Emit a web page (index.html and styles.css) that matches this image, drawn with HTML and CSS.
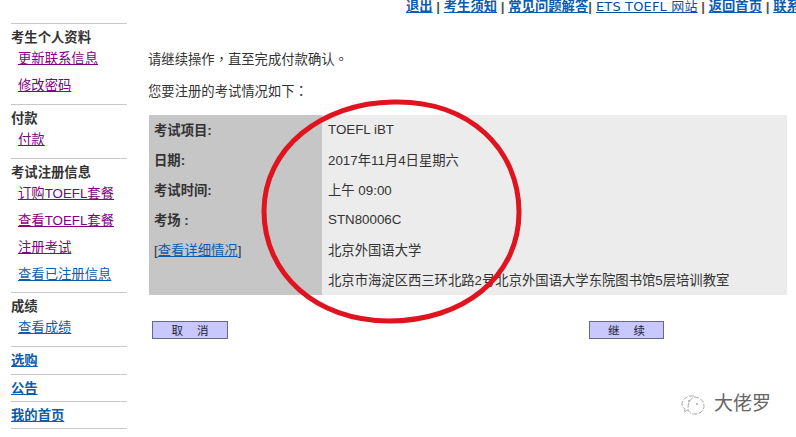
FILE: index.html
```html
<!DOCTYPE html>
<html>

<head>
    <meta charset="utf-8">
    <title>考试注册信息</title>
    <link rel="stylesheet" href="styles.css">
</head>

<body>
    <nav class="top_links">
        <a href="#">退出</a> | <a href="#">考生须知</a> | <a href="#">常见问题解答</a>|<a href="#" class="ets">ETS TOEFL 网站</a> | <a href="#">返回首页</a> | <a href="#">联系我们</a>
    </nav>

    <div class="page">
        <aside class="side">
            <div class="side_sec">
                <h4>考生个人资料</h4>
                <a href="#" class="visited">更新联系信息</a>
                <a href="#" class="visited">修改密码</a>
            </div>
            <div class="side_sec">
                <h4>付款</h4>
                <a href="#" class="visited">付款</a>
            </div>
            <div class="side_sec side_tight">
                <h4>考试注册信息</h4>
                <a href="#" class="visited">订购TOEFL套餐</a>
                <a href="#" class="visited">查看TOEFL套餐</a>
                <a href="#" class="visited">注册考试</a>
                <a href="#">查看已注册信息</a>
            </div>
            <div class="side_sec">
                <h4>成绩</h4>
                <a href="#">查看成绩</a>
            </div>
            <div class="side_link side_first"><a href="#">选购</a></div>
            <div class="side_link"><a href="#">公告</a></div>
            <div class="side_link side_last"><a href="#">我的首页</a></div>
        </aside>

        <main class="content">
            <p class="intro">请继续操作，直至完成付款确认。</p>
            <p class="intro">您要注册的考试情况如下：</p>

            <table class="info">
                <tr>
                    <th>考试项目:</th>
                    <td>TOEFL iBT</td>
                </tr>
                <tr>
                    <th>日期:</th>
                    <td>2017年11月4日星期六</td>
                </tr>
                <tr>
                    <th>考试时间:</th>
                    <td>上午 09:00</td>
                </tr>
                <tr>
                    <th>考场 :</th>
                    <td>STN80006C</td>
                </tr>
                <tr>
                    <th class="detail">[<a href="#">查看详细情况</a>]</th>
                    <td>北京外国语大学</td>
                </tr>
                <tr>
                    <th></th>
                    <td>北京市海淀区西三环北路2号北京外国语大学东院图书馆5层培训教室</td>
                </tr>
            </table>

            <div class="actions">
                <button class="btn">取 消</button>
                <button class="btn btn_next">继 续</button>
            </div>
        </main>
    </div>

    <!-- red hand drawn ring on top of the table -->
    <svg class="ring" width="796" height="437" viewBox="0 0 796 437">
        <path d="M393 102 C470 100 519 150 519 212 C519 278 462 321 389 321 C316 321 264 274 264 211 C264 148 322 103 393 102 Z" fill="none" stroke="#e0141f" stroke-width="5" />
    </svg>

    <div class="mark">
        <svg width="32" height="24" viewBox="0 0 32 24">
            <g fill="none" stroke="#aaa" stroke-width="1" stroke-dasharray="5 1.5">
                <path d="M18 4 C12 3 6 7 6 12 C6 14 7 16 9 17 L8 20 L12 18" />
                <path d="M18 5 C24 5 28 9 28 14 C28 19 24 22 19 22 C15 22 12 20 12 16 C12 11 14 7 18 5 Z" />
            </g>
            <circle cx="13" cy="9" r="1" fill="#aaa" />
            <circle cx="21" cy="12" r="1" fill="#aaa" />
        </svg>
        <span>大佬罗</span>
    </div>
</body>

</html>
```

FILE: styles.css
```css
/* vars */
:root {
    --link: #0b5cad;
    --visited: #800080;
    --text: #333;
    --line: #c8c8c8;
}

html {
    font-family: "Liberation Sans", "Noto Sans CJK SC", sans-serif;
    font-size: 13.33px;
    color: var(--text);
}

body {
    margin: 0;
    height: 437px;
    overflow: hidden;
    position: relative;
    background: white;
}

a {
    color: var(--link);
}

.top_links {
    margin: -2px 0 0 406px;
    width: 420px;
    height: 17px;
    line-height: 17px;
    font-size: 13.33px;
    font-weight: bold;
    white-space: nowrap;
    color: #555;
}

.top_links .ets {
    font-family: "DejaVu Sans", "Noto Sans CJK SC", sans-serif;
    font-weight: normal;
    font-size: 13px;
    letter-spacing: 0.15px;
    margin-left: 4px;
    color: #0a4f9c;
}

.page {
    display: flex;
    padding: 8px 0 0 11px;
}

.side {
    width: 116px;
    flex: none;
}

.side_sec {
    border-top: 1px solid var(--line);
    padding: 4px 0 5px;
}

.side_tight {
    padding-bottom: 4px;
}

.side_sec h4 {
    margin: 1px 0 -2px;
    font-size: 13.33px;
    line-height: 18px;
}

.side_sec a {
    display: block;
    line-height: 27px;
    margin-left: 7px;
}

.side_sec a.visited {
    color: var(--visited);
}

.side_link {
    border-top: 1px solid var(--line);
    padding-top: 1px;
    line-height: 25px;
    font-weight: bold;
}

.side_first {
    line-height: 26px;
}

.side_last {
    border-bottom: 1px solid var(--line);
}

.content {
    width: 638px;
    margin-left: 22px;
}

.intro {
    margin: 0 0 0 -1px;
    line-height: 32px;
    font-family: "Liberation Sans", "Noto Sans CJK TC", sans-serif;
}

.intro:first-child {
    margin-top: 21px;
}

.info {
    width: 100%;
    margin-top: 7px;
    border-collapse: collapse;
    background: #ececec;
}

.info th {
    width: 173px;
    height: 30px;
    padding: 0 0 1px 5px;
    box-sizing: border-box;
    background: #c6c6c6;
    text-align: left;
}

.info td {
    padding: 0 0 1px 6px;
}

.info .detail {
    font-weight: normal;
    padding-left: 5px;
}

.actions {
    display: flex;
    justify-content: space-between;
    margin-top: 26px;
    padding: 0 123px 0 3px;
}

.btn {
    width: 76px;
    height: 18px;
    padding: 0;
    border: 1px solid #666a8a;
    background: #c8c8ff;
    color: #223;
    font-family: inherit;
    font-size: 11.5px;
    word-spacing: 11px;
}

.btn_next {
    width: 75px;
}

.ring {
    position: absolute;
    top: 0;
    left: 0;
}

.mark {
    position: absolute;
    left: 676px;
    top: 391px;
    display: flex;
    align-items: center;
    gap: 6px;
    color: #666;
    font-size: 19px;
    line-height: 26px;
}
```
